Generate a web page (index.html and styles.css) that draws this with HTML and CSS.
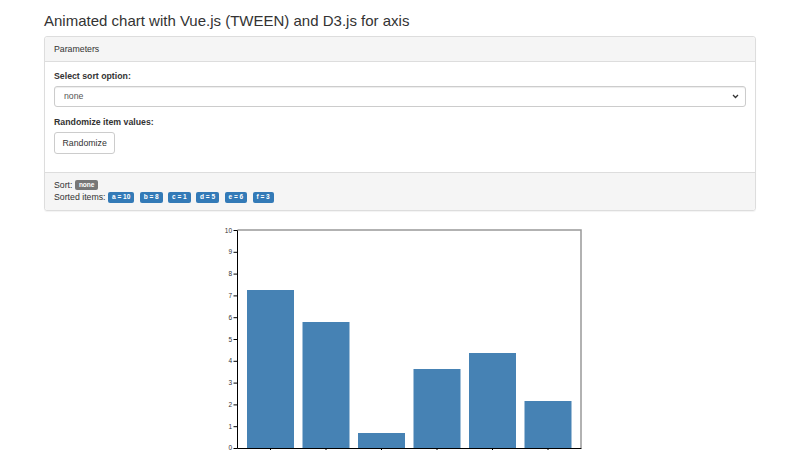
FILE: index.html
```html
<!DOCTYPE html>
<html>
<head>
<meta charset="utf-8">
<link rel="stylesheet" href="styles.css">
</head>
<body>
<div class="container">
  <h3 class="title">Animated chart with Vue.js (TWEEN) and D3.js for axis</h3>
  <div class="panel">
    <div class="panel-heading">Parameters</div>
    <div class="panel-body">
      <div class="form-group">
        <label class="lbl">Select sort option:</label>
        <div class="select-wrap">
          <select class="select"><option>none</option></select>
          <svg class="chev" width="7" height="5" viewBox="0 0 7 5"><path d="M1 1 L3.5 3.5 L6 1" fill="none" stroke="#333" stroke-width="1.3"/></svg>
        </div>
      </div>
      <div class="form-group">
        <label class="lbl">Randomize item values:</label>
        <div><button class="btn">Randomize</button></div>
      </div>
    </div>
    <div class="panel-footer">
      <div class="row">Sort: <span class="badge gray">none</span></div>
      <div class="row">Sorted items: <span class="badge blue">a = 10</span><span class="badge blue">b = 8</span><span class="badge blue">c = 1</span><span class="badge blue">d = 5</span><span class="badge blue">e = 6</span><span class="badge blue">f = 3</span></div>
    </div>
  </div>
  <div class="chart">
    <svg width="400" height="240" viewBox="0 0 400 240">
      <g fill="#4682b4">
        <rect x="47" y="70" width="47" height="158"/>
        <rect x="102.5" y="102" width="47" height="126"/>
        <rect x="158" y="213" width="47" height="15"/>
        <rect x="213.5" y="149" width="47" height="79"/>
        <rect x="269" y="133" width="47" height="95"/>
        <rect x="324.5" y="181" width="47" height="47"/>
      </g>
      <path d="M37.5 10 H381 V228" fill="none" stroke="#999" stroke-width="1.5"/>
      <g stroke="#000" stroke-width="1" fill="none">
        <path d="M33.5 10.5 H37.5 V228.5 H33.5"/>
        <path d="M37.5 228.5 H381.5"/>
        <path d="M33.5 32.3 H37.5 M33.5 54.1 H37.5 M33.5 75.9 H37.5 M33.5 97.7 H37.5 M33.5 119.5 H37.5 M33.5 141.3 H37.5 M33.5 163.1 H37.5 M33.5 184.9 H37.5 M33.5 206.7 H37.5"/>
        <path d="M70.5 228 V234 M126 228 V234 M181.5 228 V234 M237 228 V234 M292.5 228 V234 M348 228 V234"/>
      </g>
      <g class="ticks" text-anchor="end">
        <text x="32" y="12.5">10</text>
        <text x="32" y="34.3">9</text>
        <text x="32" y="56.1">8</text>
        <text x="32" y="77.9">7</text>
        <text x="32" y="99.7">6</text>
        <text x="32" y="121.5">5</text>
        <text x="32" y="143.3">4</text>
        <text x="32" y="165.1">3</text>
        <text x="32" y="186.9">2</text>
        <text x="32" y="208.7">1</text>
        <text x="32" y="229.5">0</text>
      </g>
    </svg>
  </div>
</div>
</body>
</html>
```
FILE: styles.css
```css
html, body {
  margin: 0;
  padding: 0;
  background: #fff;
}
body {
  font-family: "Liberation Sans", Arial, sans-serif;
  color: #333;
}
.container {
  width: 712px;
  margin-left: 44px;
}
.title {
  font-size: 15px;
  font-weight: normal;
  line-height: 16.5px;
  margin: 12.5px 0 7px 0;
  color: #333;
}
.panel {
  border: 1px solid #ddd;
  border-radius: 3px;
  box-shadow: 0 1px 1px rgba(0,0,0,0.05);
}
.panel-heading {
  background: #f5f5f5;
  border-bottom: 1px solid #ddd;
  font-size: 8.75px;
  line-height: 12.5px;
  padding: 5.5px 9px 5.5px 9px;
  border-radius: 3px 3px 0 0;
}
.panel-body {
  padding: 8px 9px 18px 9px;
}
.form-group + .form-group {
  margin-top: 9.4px;
}
.lbl {
  display: block;
  font-size: 8.75px;
  font-weight: bold;
  line-height: 12.5px;
  margin-bottom: 3.5px;
}
.select-wrap {
  position: relative;
}
.select {
  -webkit-appearance: none;
  appearance: none;
  display: block;
  width: 100%;
  height: 21.5px;
  border: 1px solid #ccc;
  border-radius: 3px;
  background: #fff;
  font-family: "Liberation Sans", Arial, sans-serif;
  font-size: 8.75px;
  color: #555;
  padding: 0 9px;
  box-shadow: inset 0 1px 1px rgba(0,0,0,0.075);
}
.chev {
  position: absolute;
  right: 7px;
  top: 8.5px;
}
.btn {
  display: block;
  height: 21.5px;
  padding: 0 7.5px;
  border: 1px solid #ccc;
  border-radius: 3px;
  background: #fff;
  font-family: "Liberation Sans", Arial, sans-serif;
  font-size: 8.75px;
  color: #333;
}
.panel-footer {
  background: #f5f5f5;
  border-top: 1px solid #ddd;
  padding: 6px 9px 6px 9px;
  font-size: 8.75px;
  line-height: 12.5px;
  border-radius: 0 0 3px 3px;
}
.row {
  display: flex;
  align-items: center;
  height: 12.5px;
}
.badge {
  display: inline-block;
  font-size: 6.56px;
  font-weight: bold;
  color: #fff;
  line-height: 6.56px;
  padding: 1.8px 3.9px 2px 3.9px;
  border-radius: 2px;
}
.badge.blue {
  background: #337ab7;
  margin-right: 5.5px;
}
.row .badge.blue:first-child {
  margin-left: 2.5px;
}
.badge.gray {
  background: #777;
  margin-left: 2.5px;
}
.chart {
  display: flex;
  justify-content: center;
  margin-top: 9px;
  margin-left: -44px;
  width: 800px;
}
.chart svg {
  display: block;
}
.ticks {
  font-family: "Liberation Sans", Arial, sans-serif;
  font-size: 6.5px;
  fill: #333;
}
```
